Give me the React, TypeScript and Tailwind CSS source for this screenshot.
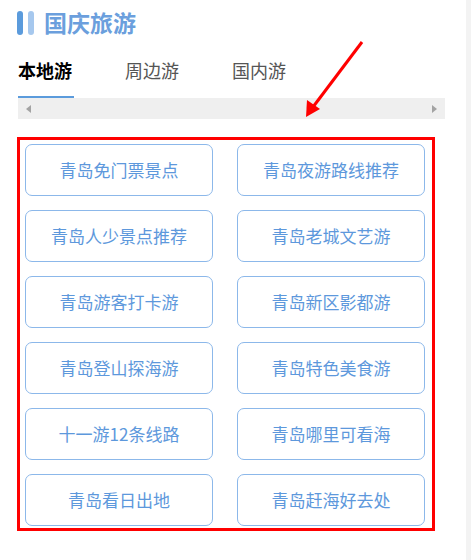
import React from "react";

const items = [
  "青岛免门票景点",
  "青岛夜游路线推荐",
  "青岛人少景点推荐",
  "青岛老城文艺游",
  "青岛游客打卡游",
  "青岛新区影都游",
  "青岛登山探海游",
  "青岛特色美食游",
  "十一游12条线路",
  "青岛哪里可看海",
  "青岛看日出地",
  "青岛赶海好去处",
];

const font = { fontFamily: '"Noto Sans CJK SC", "Noto Sans", sans-serif' };

export default function App() {
  return (
    <div className="flex h-[560px] w-[471px] bg-white" style={font}>
      <div className="relative w-[466px]">
        {/* title */}
        <div className="flex h-[44px] items-center pl-[17px] pt-[1px]">
          <span className="h-[24px] w-[6px] rounded-full bg-[#5b9bdc]" />
          <span className="ml-[5px] h-[24px] w-[6px] rounded-full bg-[#a6c8ee]" />
          <span className="ml-[10px] text-[23px] font-bold leading-none text-[#6b9fdd]">国庆旅游</span>
        </div>

        {/* tabs */}
        <div className="flex h-[52px] items-center gap-[53px] pl-[18px] text-[18px] leading-none">
          <span className="font-bold text-black">本地游</span>
          <span className="text-[#555]">周边游</span>
          <span className="text-[#555]">国内游</span>
        </div>
        <div className="ml-[18px] h-[2px] w-[56px] bg-[#5b9bdc]" />

        {/* scroll track */}
        <div className="ml-[18px] flex h-[21px] w-[427px] items-center justify-between bg-[#efefef] px-[8px]">
          <span className="h-0 w-0 border-y-[4px] border-r-[5px] border-y-transparent border-r-[#a3a3a3]" />
          <span className="h-0 w-0 border-y-[4px] border-l-[5px] border-y-transparent border-l-[#a3a3a3]" />
        </div>

        {/* list */}
        <div className="ml-[17px] mt-[18px] h-[394px] w-[418px] border-[3px] border-[#ff0000] pl-[5px] pt-[4px]">
          <div className="grid grid-cols-[188px_188px] gap-x-[24px] gap-y-[14px]">
            {items.map((t) => (
              <div
                key={t}
                className="flex h-[52px] items-center justify-center rounded-[7px] border border-[#8cb8ea] text-[17px] text-[#5d98dc]"
              >
                {t}
              </div>
            ))}
          </div>
        </div>

        {/* red arrow annotation */}
        <svg className="absolute left-0 top-0" width="466" height="140" viewBox="0 0 466 140">
          <line x1="362" y1="42" x2="313" y2="107" stroke="#ff0000" strokeWidth="3" />
          <polygon points="306,117 307,100 320,109" fill="#ff0000" />
        </svg>
      </div>
      <div className="h-full w-[5px] bg-[#f3f3f3]" />
    </div>
  );
}
